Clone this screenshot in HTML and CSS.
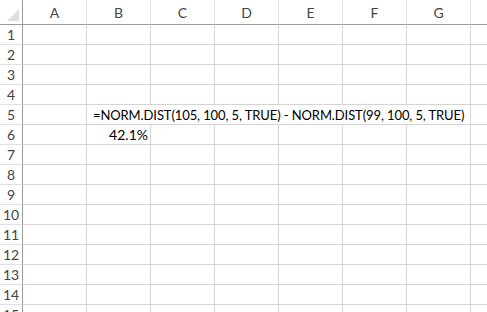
FILE: index.html
```html
<!DOCTYPE html>
<html lang="en">
<head>
  <meta charset="UTF-8">
  <title>Sheet1</title>
  <link rel="stylesheet" href="styles.css">
</head>
<body>
  <div class="sheet">
    <div class="corner"><span class="tri"></span></div>
    <div class="colhead">A</div>
    <div class="colhead">B</div>
    <div class="colhead">C</div>
    <div class="colhead">D</div>
    <div class="colhead">E</div>
    <div class="colhead">F</div>
    <div class="colhead">G</div>
    <div class="colhead last"></div>

    <div class="rowhead">1</div><div class="cell"></div><div class="cell"></div><div class="cell"></div><div class="cell"></div><div class="cell"></div><div class="cell"></div><div class="cell"></div><div class="cell last"></div>
    <div class="rowhead">2</div><div class="cell"></div><div class="cell"></div><div class="cell"></div><div class="cell"></div><div class="cell"></div><div class="cell"></div><div class="cell"></div><div class="cell last"></div>
    <div class="rowhead">3</div><div class="cell"></div><div class="cell"></div><div class="cell"></div><div class="cell"></div><div class="cell"></div><div class="cell"></div><div class="cell"></div><div class="cell last"></div>
    <div class="rowhead">4</div><div class="cell"></div><div class="cell"></div><div class="cell"></div><div class="cell"></div><div class="cell"></div><div class="cell"></div><div class="cell"></div><div class="cell last"></div>
    <div class="rowhead">5</div><div class="cell"></div><div class="cell text span6">=NORM.DIST(105, 100, 5, TRUE) - NORM.DIST(99, 100, 5, TRUE)</div><div class="cell last"></div>
    <div class="rowhead">6</div><div class="cell"></div><div class="cell num">42.1%</div><div class="cell"></div><div class="cell"></div><div class="cell"></div><div class="cell"></div><div class="cell"></div><div class="cell last"></div>
    <div class="rowhead">7</div><div class="cell"></div><div class="cell"></div><div class="cell"></div><div class="cell"></div><div class="cell"></div><div class="cell"></div><div class="cell"></div><div class="cell last"></div>
    <div class="rowhead">8</div><div class="cell"></div><div class="cell"></div><div class="cell"></div><div class="cell"></div><div class="cell"></div><div class="cell"></div><div class="cell"></div><div class="cell last"></div>
    <div class="rowhead">9</div><div class="cell"></div><div class="cell"></div><div class="cell"></div><div class="cell"></div><div class="cell"></div><div class="cell"></div><div class="cell"></div><div class="cell last"></div>
    <div class="rowhead">10</div><div class="cell"></div><div class="cell"></div><div class="cell"></div><div class="cell"></div><div class="cell"></div><div class="cell"></div><div class="cell"></div><div class="cell last"></div>
    <div class="rowhead">11</div><div class="cell"></div><div class="cell"></div><div class="cell"></div><div class="cell"></div><div class="cell"></div><div class="cell"></div><div class="cell"></div><div class="cell last"></div>
    <div class="rowhead">12</div><div class="cell"></div><div class="cell"></div><div class="cell"></div><div class="cell"></div><div class="cell"></div><div class="cell"></div><div class="cell"></div><div class="cell last"></div>
    <div class="rowhead">13</div><div class="cell"></div><div class="cell"></div><div class="cell"></div><div class="cell"></div><div class="cell"></div><div class="cell"></div><div class="cell"></div><div class="cell last"></div>
    <div class="rowhead">14</div><div class="cell"></div><div class="cell"></div><div class="cell"></div><div class="cell"></div><div class="cell"></div><div class="cell"></div><div class="cell"></div><div class="cell last"></div>
    <div class="rowhead">15</div><div class="cell"></div><div class="cell"></div><div class="cell"></div><div class="cell"></div><div class="cell"></div><div class="cell"></div><div class="cell"></div><div class="cell last"></div>
  </div>
</body>
</html>
```

FILE: styles.css
```css
body {
  margin: 0;
  background: #fff;
  font-family: Lato, "Liberation Sans", sans-serif;
  overflow: hidden;
}
.sheet {
  display: grid;
  grid-template-columns: 23px repeat(7, 64px) 1fr;
  grid-template-rows: 25px repeat(15, 20px);
}
.sheet > div {
  box-sizing: border-box;
  border-right: 1px solid #d4d4d4;
  border-bottom: 1px solid #d4d4d4;
}
.corner {
  position: relative;
  border-right-color: #9b9b9b !important;
  border-bottom-color: #9b9b9b !important;
}
.tri {
  position: absolute;
  right: 3px;
  bottom: 3px;
  width: 0;
  height: 0;
  border-left: 12px solid transparent;
  border-bottom: 12px solid #dfdfdf;
}
.colhead {
  border-bottom-color: #9b9b9b !important;
  border-right-color: #e1e1e1 !important;
  color: #444;
  font-size: 14px;
  text-align: center;
  line-height: 25px;
}
.rowhead {
  border-right-color: #9b9b9b !important;
  border-bottom-color: #e1e1e1 !important;
  color: #444;
  font-size: 14px;
  text-align: center;
  line-height: 20px;
}
.last {
  border-right: none !important;
}
.cell {
  font-size: 14px;
  line-height: 20px;
  color: #000;
}
.text {
  padding-left: 6px;
  white-space: nowrap;
  font-size: 13px;
  letter-spacing: -0.1px;
}
.span6 {
  grid-column: span 6;
}
.num {
  text-align: right;
  padding-right: 2px;
}
```
